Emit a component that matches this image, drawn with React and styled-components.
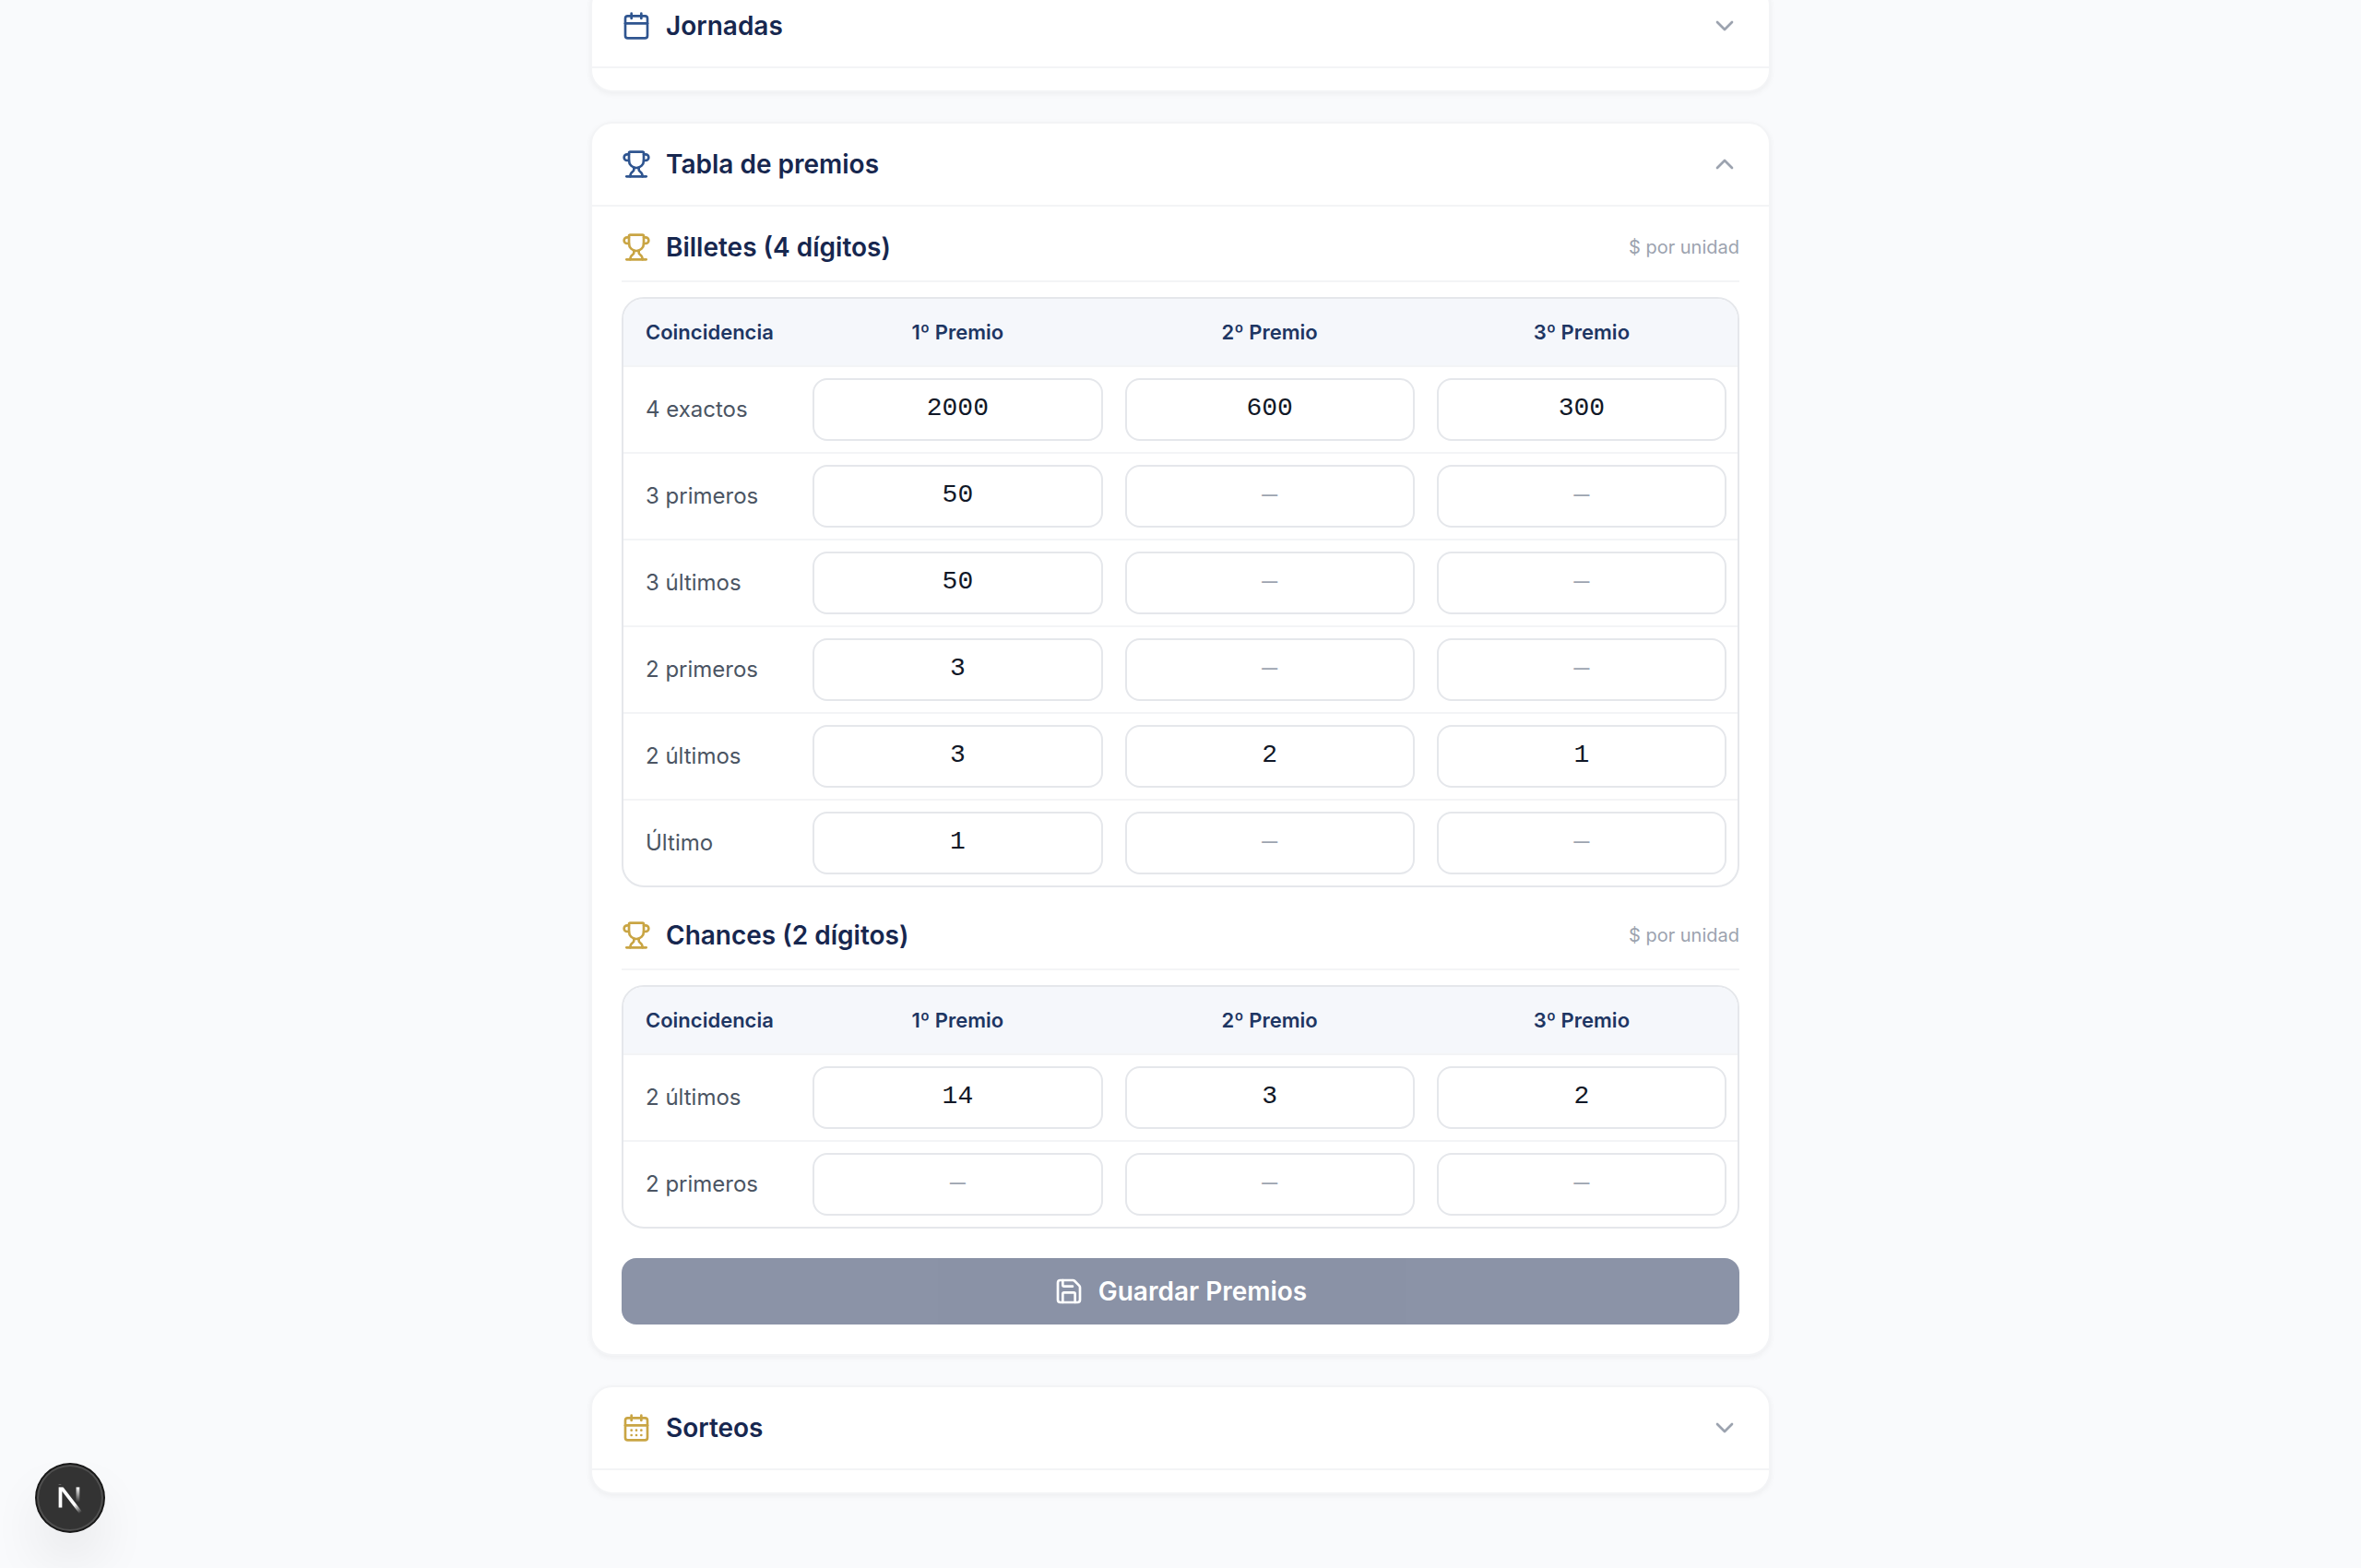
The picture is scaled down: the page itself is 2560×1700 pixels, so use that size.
import React, { useState } from 'react';
import styled, { createGlobalStyle, ThemeProvider } from 'styled-components';
import {
  Calendar,
  CalendarDays,
  ChevronDown,
  ChevronUp,
  Save,
  Trophy,
} from 'lucide-react';

const theme = {
  background: '#f9fafc',
  surface: '#ffffff',
  navy: '#17274f',
  navyLight: '#1e3663',
  blue: '#2f5590',
  gold: '#c9a544',
  headBackground: '#f5f7fb',
  text: '#111827',
  label: '#4b5563',
  muted: '#9ca3af',
  line: '#f3f4f6',
  border: '#e5e7eb',
};

const GlobalStyle = createGlobalStyle`
  *, *::before, *::after {
    box-sizing: border-box;
  }
  body {
    margin: 0;
    overflow: hidden;
    background: ${theme.background};
    color: ${theme.text};
    font-family: Inter, 'Liberation Sans', sans-serif;
    font-size: 28px;
    line-height: 40px;
  }
  button, input {
    font: inherit;
  }
`;

// The list starts a little above the fold, as when the page is scrolled
const Page = styled.main`
  display: flex;
  flex-direction: column;
  gap: 32px;
  width: 100%;
  max-width: 1280px;
  margin: -18px auto 0;
  padding-bottom: 80px;
`;

const Card = styled.section`
  background: ${(props) => props.theme.surface};
  border: 2px solid ${(props) => props.theme.line};
  border-radius: 24px;
  box-shadow: 0 2px 6px rgba(0, 0, 0, 0.05);
  overflow: hidden;
`;

const CardToggle = styled.button`
  display: flex;
  align-items: center;
  gap: 16px;
  width: 100%;
  padding: 24px 32px;
  border: 0;
  border-bottom: 2px solid ${(props) => props.theme.line};
  background: none;
  color: ${(props) => props.theme.muted};
  text-align: left;
  cursor: pointer;
`;

const Title = styled.span`
  flex: 1;
  color: ${(props) => props.theme.navy};
  font-weight: 600;
`;

const CardBody = styled.div`
  display: flex;
  flex-direction: column;
  gap: 32px;
  padding: ${(props) => (props.$open ? '24px 32px 32px' : '24px 32px 0')};
`;

const PrizeGroup = styled.div`
  display: flex;
  flex-direction: column;
  gap: 16px;
`;

const GroupHeader = styled.div`
  display: flex;
  align-items: center;
  gap: 16px;
  padding-bottom: 16px;
  border-bottom: 2px solid ${(props) => props.theme.line};
`;

const GroupTitle = styled.h3`
  flex: 1;
  margin: 0;
  color: ${(props) => props.theme.navy};
  font-size: 28px;
  font-weight: 600;
`;

const Hint = styled.span`
  color: ${(props) => props.theme.muted};
  font-size: 20px;
`;

const TableFrame = styled.div`
  border: 2px solid ${(props) => props.theme.border};
  border-radius: 24px;
  overflow: hidden;
`;

const Table = styled.table`
  width: 100%;
  table-layout: fixed;
  border-collapse: separate;
  border-spacing: 0;
`;

const HeadCell = styled.th`
  width: ${(props) => props.$width};
  height: 74px;
  padding: 0 24px;
  border-bottom: 2px solid ${(props) => props.theme.line};
  background: ${(props) => props.theme.headBackground};
  color: ${(props) => props.theme.navyLight};
  font-size: 22px;
  font-weight: 600;
  line-height: 32px;
  text-align: ${(props) => (props.$left ? 'left' : 'center')};
  white-space: nowrap;
`;

const Row = styled.tr`
  &:not(:last-child) > * {
    border-bottom: 2px solid ${(props) => props.theme.line};
  }
`;

const RowLabel = styled.th`
  padding: 0 0 0 24px;
  color: ${(props) => props.theme.label};
  font-size: 24px;
  font-weight: 400;
  line-height: 32px;
  text-align: left;
  white-space: nowrap;
`;

const Cell = styled.td`
  padding: 12px;
`;

const PrizeInput = styled.input`
  display: block;
  width: 100%;
  height: 68px;
  padding: 10px 16px 14px;
  border: 2px solid ${(props) => props.theme.border};
  border-radius: 16px;
  outline: none;
  background: ${(props) => props.theme.surface};
  color: ${(props) => props.theme.text};
  font-family: 'Liberation Mono', monospace;
  text-align: center;
  &::placeholder {
    color: ${(props) => props.theme.muted};
    opacity: 1;
  }
  &:focus {
    border-color: ${(props) => props.theme.blue};
  }
`;

const SaveButton = styled.button`
  display: flex;
  align-items: center;
  justify-content: center;
  gap: 16px;
  width: 100%;
  padding: 16px;
  border: 0;
  border-radius: 16px;
  background: ${(props) => props.theme.navy};
  color: #ffffff;
  font-weight: 600;
  &:disabled {
    opacity: 0.5;
  }
`;

const DevBadge = styled.button`
  position: fixed;
  left: 40px;
  bottom: 40px;
  width: 72px;
  height: 72px;
  padding: 0;
  border: 0;
  border-radius: 50%;
  background: #333333;
  box-shadow: 0 0 0 2px #171717, inset 0 0 0 2px rgba(255, 255, 255, 0.14),
    0 32px 64px -16px rgba(0, 0, 0, 0.24);
  svg {
    display: block;
  }
`;

const prizes = ['1º Premio', '2º Premio', '3º Premio'];

const groups = [
  {
    title: 'Billetes (4 dígitos)',
    rows: [
      { label: '4 exactos', values: ['2000', '600', '300'] },
      { label: '3 primeros', values: ['50', '', ''] },
      { label: '3 últimos', values: ['50', '', ''] },
      { label: '2 primeros', values: ['3', '', ''] },
      { label: '2 últimos', values: ['3', '2', '1'] },
      { label: 'Último', values: ['1', '', ''] },
    ],
  },
  {
    title: 'Chances (2 dígitos)',
    rows: [
      { label: '2 últimos', values: ['14', '3', '2'] },
      { label: '2 primeros', values: ['', '', ''] },
    ],
  },
];

const Accordion = ({ icon: Icon, color, title, defaultOpen, children }) => {
  const [open, setOpen] = useState(Boolean(defaultOpen));
  const Chevron = open ? ChevronUp : ChevronDown;

  return (
    <Card>
      <CardToggle
        type="button"
        aria-expanded={open}
        onClick={() => setOpen(!open)}
      >
        <Icon size={32} color={color} aria-hidden="true" />
        <Title>{title}</Title>
        <Chevron size={32} aria-hidden="true" />
      </CardToggle>
      <CardBody $open={open}>{open && children}</CardBody>
    </Card>
  );
};

const PrizeTable = ({ title, rows, onChange }) => (
  <PrizeGroup>
    <GroupHeader>
      <Trophy size={32} color={theme.gold} aria-hidden="true" />
      <GroupTitle>{title}</GroupTitle>
      <Hint>$ por unidad</Hint>
    </GroupHeader>
    <TableFrame>
      <Table>
        <thead>
          <tr>
            <HeadCell scope="col" $width="16%" $left>
              Coincidencia
            </HeadCell>
            {prizes.map((prize) => (
              <HeadCell key={prize} scope="col" $width="28%">
                {prize}
              </HeadCell>
            ))}
          </tr>
        </thead>
        <tbody>
          {rows.map((row) => (
            <Row key={row.label}>
              <RowLabel scope="row">{row.label}</RowLabel>
              {row.values.map((value, index) => (
                <Cell key={prizes[index]}>
                  <PrizeInput
                    type="text"
                    inputMode="numeric"
                    placeholder="—"
                    aria-label={`${title}, ${row.label}, ${prizes[index]}`}
                    defaultValue={value}
                    onChange={onChange}
                  />
                </Cell>
              ))}
            </Row>
          ))}
        </tbody>
      </Table>
    </TableFrame>
  </PrizeGroup>
);

const NextLogo = () => (
  <svg width="72" height="72" viewBox="0 0 36 36" fill="none" aria-hidden="true">
    <defs>
      <linearGradient
        id="diagonal"
        x1="9.955"
        y1="11.129"
        x2="15.478"
        y2="18.167"
        gradientUnits="userSpaceOnUse"
      >
        <stop stopColor="white" />
        <stop offset="0.604" stopColor="white" stopOpacity="0" />
        <stop offset="1" stopColor="white" stopOpacity="0" />
      </linearGradient>
      <linearGradient
        id="stem"
        x1="11.822"
        y1="1.4"
        x2="11.791"
        y2="9.625"
        gradientUnits="userSpaceOnUse"
      >
        <stop stopColor="white" />
        <stop offset="1" stopColor="white" stopOpacity="0" />
      </linearGradient>
      <mask id="cut">
        <rect width="100%" height="100%" fill="white" />
        <rect width="5" height="1.5" fill="black" />
      </mask>
    </defs>
    <g transform="translate(10.4 10.7)">
      <path
        d="M13.3 15.2 L2.34 1 V12.6"
        stroke="url(#diagonal)"
        strokeWidth="1.86"
        mask="url(#cut)"
      />
      <path d="M11.825 1.5 V13.1" stroke="url(#stem)" strokeWidth="1.86" />
    </g>
  </svg>
);

const App = () => {
  const [dirty, setDirty] = useState(false);

  return (
    <ThemeProvider theme={theme}>
      <GlobalStyle />
      <Page>
        <Accordion icon={Calendar} color={theme.blue} title="Jornadas" />
        <Accordion
          icon={Trophy}
          color={theme.blue}
          title="Tabla de premios"
          defaultOpen
        >
          {groups.map((group) => (
            <PrizeTable
              key={group.title}
              title={group.title}
              rows={group.rows}
              onChange={() => setDirty(true)}
            />
          ))}
          <SaveButton
            type="button"
            disabled={!dirty}
            onClick={() => setDirty(false)}
          >
            <Save size={32} aria-hidden="true" />
            Guardar Premios
          </SaveButton>
        </Accordion>
        <Accordion icon={CalendarDays} color={theme.gold} title="Sorteos" />
      </Page>
      <DevBadge type="button" aria-label="Open Next.js Dev Tools">
        <NextLogo />
      </DevBadge>
    </ThemeProvider>
  );
};

export default App;
